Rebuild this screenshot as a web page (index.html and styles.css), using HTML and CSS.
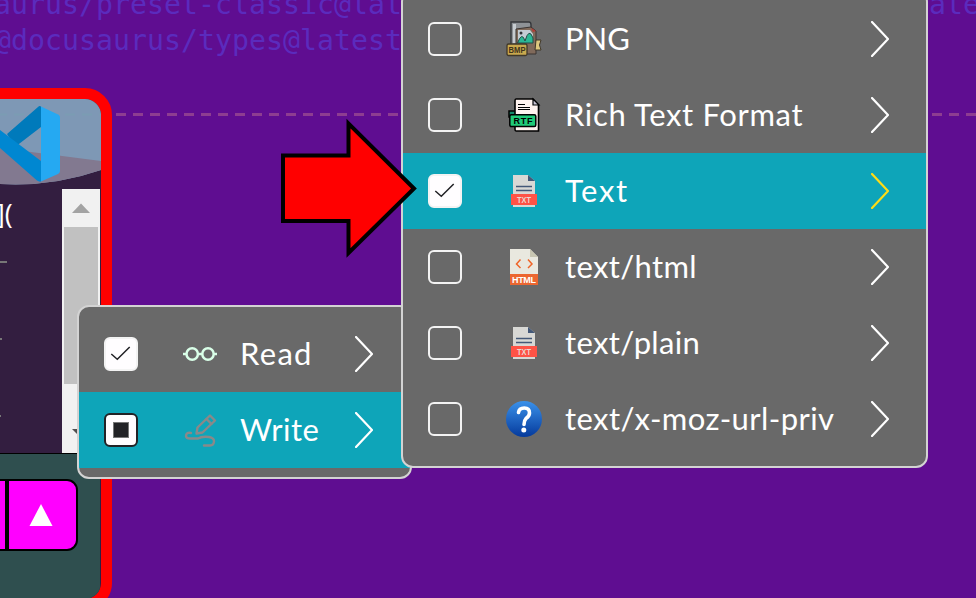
FILE: index.html
```html
<!DOCTYPE html>
<html lang="en">
<head>
<meta charset="utf-8">
<title>Clipboard menu</title>
<link rel="stylesheet" href="styles.css">
</head>
<body>
<svg class="defs" width="0" height="0" aria-hidden="true">
  <symbol id="chevron" viewBox="0 0 18 36"><path d="M1 1L17 18L1 35" fill="none" stroke="currentColor" stroke-width="2.200" stroke-linecap="round"/></symbol>
  <symbol id="check" viewBox="0 0 34 34"><path d="M7.3 17L13.3 22.3L25.7 10" fill="none" stroke="#222226" stroke-width="1.5"/></symbol>
  <symbol id="txt" viewBox="0 0 36 36">
    <path d="M7 2H22L29 8V34H7Z" fill="#d8d8d5"/><path d="M22 2V8H29Z" fill="#435878"/>
    <path d="M10 13.500H26M10 17.500H26" stroke="#435878" stroke-width="1.300"/>
    <path d="M5 21H31V32H5Z" fill="#ff5346"/>
    <text x="18" y="30.200" text-anchor="middle" textLength="14" lengthAdjust="spacingAndGlyphs" class="tag" fill="#ebd8d2">TXT</text>
  </symbol>
  <symbol id="bmp" viewBox="0 0 36 36">
    <path d="M5 1H23Q25 1 25 4V26H5Z" fill="#8e9297" stroke="#34363a" stroke-width="1.400"/>
    <path d="M7 3H10V22H7Z" fill="#c6cbd0"/>
    <path d="M10 8L25 6L30 10V33H10Z" fill="#806a5b" stroke="#3b3532"/>
    <path d="M12 9H24L27 13V22H12Z" fill="#c3ccd4"/>
    <path d="M25 7L30 10L27 11Z" fill="#b43c36"/>
    <circle cx="15" cy="12" r="1.500" fill="#303238"/>
    <path d="M11.500 22Q16 10 19 20Q23 6 27 17V22Z" fill="#2bb795" stroke="#244a46"/>
    <path d="M30 19H35L33.500 24L35 29H29Z" fill="#dcc77e" stroke="#40382a"/>
    <rect x="1" y="23" width="20" height="11.500" rx="1.500" fill="#c9a94e" stroke="#40382a" stroke-width="1.300"/>
    <text x="11" y="32.300" text-anchor="middle" textLength="17" lengthAdjust="spacingAndGlyphs" class="tag" fill="#40331c">BMP</text>
  </symbol>
  <symbol id="rtf" viewBox="0 0 36 36">
    <path d="M3 14H10V20H3Z" fill="#13896a" stroke="#000" stroke-width="1.500"/>
    <path d="M10 2H27L32.500 8V34H10Q9 34 9 32V4Q9 2 10 2Z" fill="#fff3ef" stroke="#000" stroke-width="1.600"/>
    <path d="M27 2V8H33Z" fill="#c8c4d4" stroke="#000" stroke-width="1.200"/>
    <path d="M12 7.500H19M12 10.500H24M12 12.500H24" stroke="#000" stroke-width="1.100"/>
    <rect x="3.800" y="17.800" width="26" height="11.800" rx="1.500" fill="#20ca78" stroke="#000" stroke-width="1.500"/>
    <text x="17" y="27.300" text-anchor="middle" textLength="19" class="tag" fill="#000">RTF</text>
  </symbol>
  <symbol id="html" viewBox="0 0 36 36">
    <path d="M4 0H24L32 8V26H4Z" fill="#e9e8df"/><path d="M24 0V8H32Z" fill="#c8c6b2"/>
    <path d="M14.500 10.500L10.500 15L14.500 19M22 10.500L26 15L22 19" fill="none" stroke="#ef6529" stroke-width="1.500"/>
    <path d="M4 25H32V36H4Z" fill="#ec6630"/>
    <text x="18" y="34" text-anchor="middle" textLength="24" class="tag" fill="#fff">HTML</text>
  </symbol>
  <symbol id="help" viewBox="0 0 36 36">
    <linearGradient id="blue" x2="0" y2="1"><stop stop-color="#3a91ea"/><stop offset="1" stop-color="#053a9c"/></linearGradient>
    <circle cx="18" cy="18" r="18" fill="url(#blue)"/>
    <path d="M12.500 11.500Q13 7 18.300 7Q23.500 7 23.500 12Q23.500 15 20 17.500Q18 19.500 18 23.500" fill="none" stroke="#fff" stroke-width="3.600" stroke-linecap="round"/>
    <circle cx="17.800" cy="29" r="2.500" fill="#fff"/>
  </symbol>
</svg>

<div class="terminal">
  <pre class="code">aurus/preset-classic@latest @docusaurus/theme-classic@latest
@docusaurus/types@latest</pre>
  <div class="rule"></div>
</div>

<section class="window">
  <header class="window-head">
    <svg width="101" height="90" viewBox="0 99 101 90">
      <path d="M0 99H101V170Q52 187 0 184Z" fill="#7e98b5"/>
      <path d="M0 148L101 161V170Q52 187 0 184Z" fill="#827990"/>
      <path d="M0 114.500H101" stroke="#7b9cb3" stroke-width="2" stroke-dasharray="10 7" stroke-dashoffset="3"/>
      <path d="M7 134L38 107Q39.500 105.500 41 106.500V127L15 147Z" fill="#007abb"/>
      <path d="M0 130L41 161V181.500Q39 182 37 180.500L0 148Z" fill="#0087d1"/>
      <path d="M41 106.500L58 114.500Q60 115.500 60 117V171Q60 173 58 174L41 181.500Z" fill="#25a9f2"/>
    </svg>
  </header>
  <div class="window-body">
    <div class="editor"><span>](</span><i></i><i class="short"></i><i class="tiny"></i></div>
    <div class="scrollbar">
      <svg width="38" height="38"><path d="M10 24L19 14.500L28 24Z" fill="#a3a3a3"/></svg>
      <div class="thumb"></div>
      <svg width="38" height="69"><path d="M10 45H28L19 54Z" fill="#505050"/></svg>
    </div>
  </div>
  <footer class="window-foot">
    <div class="key key-left"></div>
    <div class="key"><svg width="24" height="22"><path d="M12 0L23.500 22H0.500Z" fill="#fff"/></svg></div>
  </footer>
</section>

<div class="menu access">
  <div class="item">
    <span class="box on"><svg width="34" height="34"><use href="#check"/></svg></span>
    <svg class="icon" width="36" height="36"><g fill="none" stroke="#d9ffe8" stroke-width="2.500"><circle cx="10.200" cy="18" r="5.700"/><circle cx="26" cy="18" r="5.700"/><path d="M1 18H4.500M16 18H20.500M31.500 18H35"/></g></svg>
    <span class="label t-read">Read</span><svg class="chev" width="18" height="36"><use href="#chevron"/></svg>
  </div>
  <div class="item active">
    <span class="box on mixed"><b></b></span>
    <svg class="icon" width="36" height="36" fill="none" stroke="#898989" stroke-width="2.400" stroke-linecap="round" stroke-linejoin="round"><path d="M14.500 21.500L15.500 15.500L28 3.500L33 8.500L20.500 20.500Z"/><path d="M24.500 7L29.500 12"/><path d="M9 21Q4 20 4 24Q4 26.500 8 26.500H16Q20 24 27 25Q32 26 32 29Q32 33.500 28 33.500H22"/></svg>
    <span class="label t-write">Write</span><svg class="chev" width="18" height="36"><use href="#chevron"/></svg>
  </div>
</div>

<div class="menu formats">
  <div class="item"><span class="box"></span><svg class="icon" width="36" height="36"><use href="#bmp"/></svg><span class="label">PNG</span><svg class="chev" width="18" height="36"><use href="#chevron"/></svg></div>
  <div class="item"><span class="box"></span><svg class="icon" width="36" height="36"><use href="#rtf"/></svg><span class="label t-rtf">Rich Text Format</span><svg class="chev" width="18" height="36"><use href="#chevron"/></svg></div>
  <div class="item active"><span class="box on"><svg width="34" height="34"><use href="#check"/></svg></span><svg class="icon" width="36" height="36"><use href="#txt"/></svg><span class="label t-text">Text</span><svg class="chev gold" width="18" height="36"><use href="#chevron"/></svg></div>
  <div class="item"><span class="box"></span><svg class="icon" width="36" height="36"><use href="#html"/></svg><span class="label t-html">text/html</span><svg class="chev" width="18" height="36"><use href="#chevron"/></svg></div>
  <div class="item"><span class="box"></span><svg class="icon" width="36" height="36"><use href="#txt"/></svg><span class="label t-plain">text/plain</span><svg class="chev" width="18" height="36"><use href="#chevron"/></svg></div>
  <div class="item"><span class="box"></span><svg class="icon" width="36" height="36"><use href="#help"/></svg><span class="label t-moz">text/x-moz-url-priv</span><svg class="chev" width="18" height="36"><use href="#chevron"/></svg></div>
</div>

<svg class="pointer" width="142" height="144" viewBox="278 116 142 144"><path d="M283 155.500H348.500V123.500L414 188.500L348.500 253V221H283Z" fill="#f00" stroke="#000" stroke-width="4"/></svg>
</body>
</html>
```

FILE: styles.css
```css
* { box-sizing: border-box; }
body { margin: 0; width: 976px; height: 598px; overflow: hidden; position: relative; background: #5f0d91; font-family: Lato, sans-serif; }
.defs { position: absolute; }
svg { display: block; flex: none; }
.terminal { height: 598px; overflow: hidden; }
.code { margin: -13px 0 0 -6px; height: 126px; font: 28.240px/36px "DejaVu Sans Mono", monospace; color: #5b2bbd; }
.rule { height: 3px; background: repeating-linear-gradient(90deg, #8d3d91 0 10px, transparent 10px 17px) -3px 0; }
.tag { font: bold 9px "Liberation Sans", sans-serif; }
.window { position: absolute; left: -60px; top: 88px; width: 172px; height: 522px; border: 11px solid #f00; border-radius: 27px; background: #331e40; overflow: hidden; }
.window-head { height: 90px; padding-left: 49px; }
.window-body { display: flex; height: 264px; padding-left: 49px; }
.editor { width: 62px; padding-top: 9px; color: #fff; font: 27px/32px "Open Sans", sans-serif; }
.editor span { display: block; margin-left: -4px; }
.editor i { display: block; width: 7px; height: 2px; margin-top: 31px; background: #777; }
.editor .short { width: 2px; margin-top: 75px; }
.editor .tiny { width: 1px; margin-top: 75px; }
.scrollbar { width: 38px; background: #f1f1f1; }
.thumb { width: 34px; height: 157px; margin-left: 2px; background: #c1c1c1; }
.window-foot { display: flex; width: 149px; height: 146px; padding: 25px 0 0 44px; border-top: 1px solid #000; border-radius: 0 0 12px; background: #2f4f4f; }
.key { display: flex; justify-content: center; align-items: center; width: 71px; height: 72px; padding-right: 4px; border: 2px solid #000; border-radius: 0 11px 11px 0; background: #f0f; }
.key-left { width: 12px; border-radius: 0; }
.menu { position: absolute; border: 2px solid #d3d3d3; border-radius: 12px; background: #696969; padding: 9px 0; }
.access { left: 77px; top: 305px; width: 335px; }
.formats { left: 401px; top: -10px; width: 527px; height: 478px; }
.item { display: flex; align-items: center; height: 76px; padding: 0 37px 0 25px; color: #fff; }
.active { background: #0ea5b9; }
.box { display: flex; align-items: center; justify-content: center; flex: none; width: 34px; height: 34px; border: 2px solid #f3f3f3; border-radius: 6px; margin-right: 44px; }
.on { background: #fffdff; }
.box > svg { margin: -2px; }
.mixed { border-color: #222226; }
.mixed b { width: 16px; height: 16px; background: #222226; border: 1px solid #777; }
.icon { margin-right: 23px; }
.label { flex: 1; padding-bottom: 2px; font-size: 31px; white-space: nowrap; }
.access .icon { margin-right: 22px; }
.t-read { letter-spacing: 1.3px; }
.t-write { letter-spacing: 0.5px; }
.t-rtf { letter-spacing: 0.65px; }
.t-text { letter-spacing: 1.6px; }
.t-html, .t-plain { letter-spacing: 0.35px; }
.t-moz { letter-spacing: 0.42px; }
.gold { color: #ffdc16; }
.pointer { position: absolute; left: 278px; top: 116px; }
```
